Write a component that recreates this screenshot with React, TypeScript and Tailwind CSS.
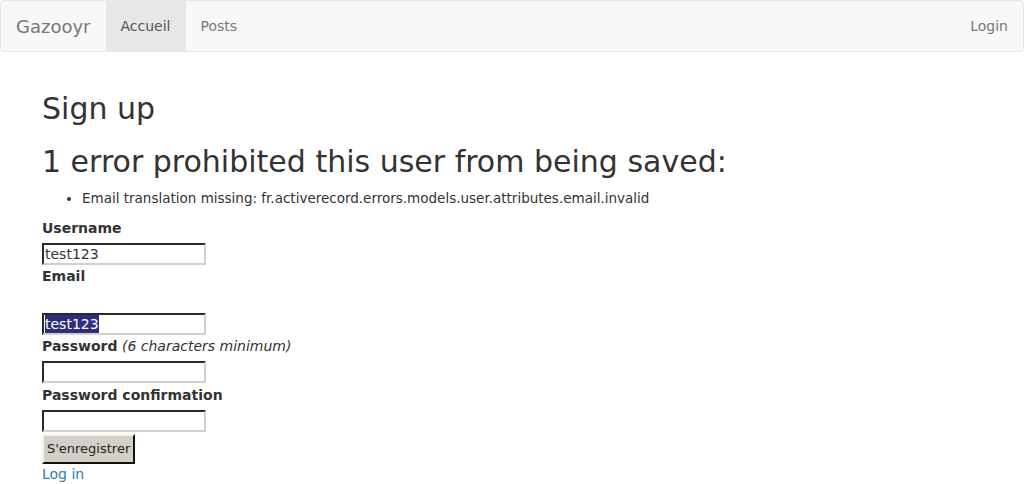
import React from "react";

const font = { fontFamily: '"DejaVu Sans", Verdana, sans-serif' };

function FakeInput({ value, selected }: { value?: string; selected?: boolean }) {
  return (
    <div className="h-[22px] w-[164px] border-2 border-t-[#2a2a2a] border-l-[#2a2a2a] border-b-[#d4d0c8] border-r-[#d4d0c8] bg-white flex items-center pl-[1px] text-[14px] leading-[18px] text-[#333]">
      {value &&
        (selected ? (
          <span className="bg-[#2d2f7e] text-white">{value}</span>
        ) : (
          <span>{value}</span>
        ))}
    </div>
  );
}

function Label({ children }: { children: React.ReactNode }) {
  return <div className="h-[25px] text-[14px] leading-[20px] font-bold text-[#333]">{children}</div>;
}

export default function App() {
  return (
    <div className="min-h-[484px] bg-white text-[#333]" style={font}>
      <nav className="h-[52px] border border-[#e7e7e7] bg-[#f8f8f8] rounded-[4px] flex items-stretch pl-[15px] pr-[15px]">
        <a className="px-[15px] flex items-center text-[18px] font-normal text-[#777] -ml-[15px]">Gazooyr</a>
        <a className="px-[15px] flex items-center text-[14px] text-[#555] bg-[#e7e7e7]">Accueil</a>
        <a className="px-[15px] flex items-center text-[14px] text-[#777]">Posts</a>
        <div className="flex-1" />
        <a className="px-[15px] flex items-center text-[14px] text-[#777] -mr-[15px]">Login</a>
      </nav>

      <div className="px-[42px] pt-[40px]">
        <h2 className="text-[30px] leading-[33px] font-normal">Sign up</h2>
        <h2 className="mt-[20px] text-[30px] leading-[33px] font-normal">1 error prohibited this user from being saved:</h2>
        <ul className="mt-[10px] mb-[10px] pl-[40px] list-disc text-[13.5px] leading-[20px]">
          <li>Email translation missing: fr.activerecord.errors.models.user.attributes.email.invalid</li>
        </ul>

        <Label>Username</Label>
        <FakeInput value="test123" />
        <div className="h-[1px]" />
        <Label>Email</Label>
        <div className="h-[22px]" />
        <FakeInput value="test123" selected />
        <div className="h-[1px]" />
        <div className="h-[25px] text-[14px] leading-[20px] text-[#333]">
          <span className="font-bold">Password</span> <em className="italic">(6 characters minimum)</em>
        </div>
        <FakeInput />
        <div className="h-[2px]" />
        <Label>Password confirmation</Label>
        <FakeInput />
        <button className="mt-[2px] h-[30px] px-[3px] bg-[#d4d0c8] border-2 border-t-[#f4f2ee] border-l-[#f4f2ee] border-b-[#111] border-r-[#111] text-[13px] text-[#222]">
          S'enregistrer
        </button>
        <div className="text-[14px] leading-[20px]">
          <a className="text-[#337ab7]">Log in</a>
        </div>
      </div>
    </div>
  );
}
